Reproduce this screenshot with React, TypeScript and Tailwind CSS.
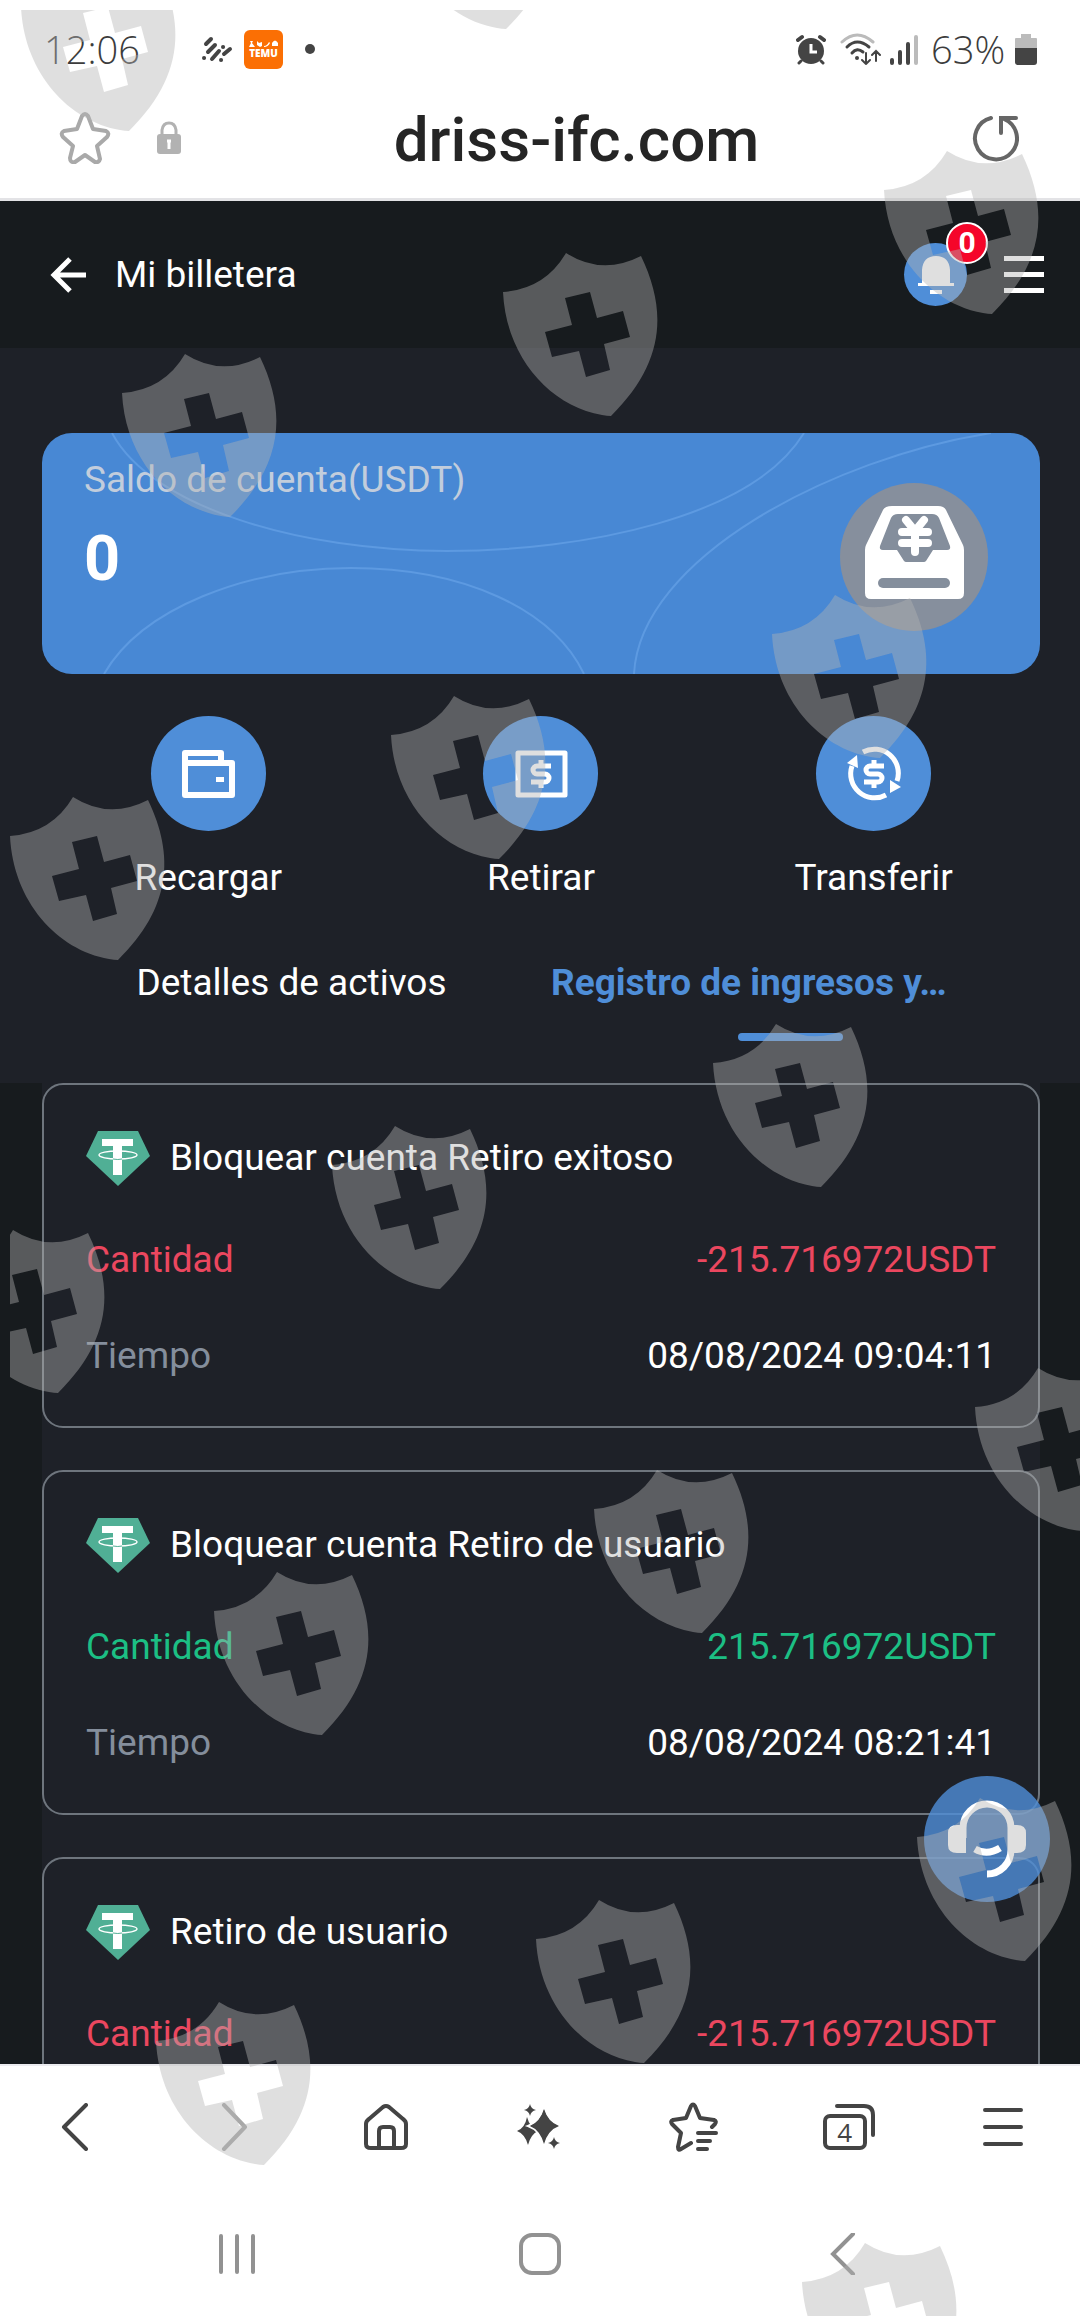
import type { ReactNode } from "react";

type Movement = {
  id: number;
  title: string;
  amount: string;
  time?: string;
  incoming: boolean;
};

const movements: Movement[] = [
  {
    id: 1,
    title: "Bloquear cuenta Retiro exitoso",
    amount: "-215.716972USDT",
    time: "08/08/2024 09:04:11",
    incoming: false,
  },
  {
    id: 2,
    title: "Bloquear cuenta Retiro de usuario",
    amount: "215.716972USDT",
    time: "08/08/2024 08:21:41",
    incoming: true,
  },
  {
    id: 3,
    title: "Retiro de usuario",
    amount: "-215.716972USDT",
    incoming: false,
  },
];

// Top-left corner of every shield in the overlay
const shields = [
  [20, -33],
  [397, -135],
  [883, 150],
  [502, 252],
  [121, 353],
  [771, 594],
  [390, 695],
  [9, 796],
  [712, 1023],
  [331, 1125],
  [-51, 1229],
  [974, 1367],
  [593, 1469],
  [213, 1571],
  [916, 1797],
  [535, 1899],
  [155, 2001],
  [801, 2242],
];

const SHIELD_PATH =
  "M1 40Q43 37 64 1Q100 24 139 4C166 60 162 112 109 164Q105 164 100 163C48 154 4 105 1 40Z" +
  "M63 46L70 73L43 80L50 105L77 99L84 125L108 118L102 92L128 85L121 59L95 66L88 40Z";

function ShieldOverlay() {
  return (
    <svg
      viewBox="0 0 1080 2316"
      preserveAspectRatio="xMidYMin slice"
      className="pointer-events-none absolute inset-0 z-20 h-full w-full"
      aria-hidden="true"
    >
      <clipPath id="overlay-area">
        <rect x="10" y="10" width="1070" height="2306" />
      </clipPath>
      <g clipPath="url(#overlay-area)" fill="#b2b2b2" fillOpacity="0.42" fillRule="evenodd">
        {shields.map(([x, y]) => (
          <path key={`${x}-${y}`} d={SHIELD_PATH} transform={`translate(${x} ${y})`} />
        ))}
      </g>
    </svg>
  );
}

function StatusBar() {
  return (
    <div className="flex h-[98px] items-center justify-between pl-11 pr-[43px] font-['Open_Sans',sans-serif] text-[38px] font-light text-[#3c3c3c]">
      <div className="flex items-center">
        <span className="w-[98px]">12:06</span>
        <svg viewBox="0 0 32 26" className="ml-[59px] h-[26px] w-8" fill="none" stroke="#444" strokeWidth="4" strokeLinecap="round">
          <path d="M5 8L10 3M7 16L14 9M3 22h.1M11 23L18 15M22 11h.1M20 24h.1M23 18L29 13" />
        </svg>
        <div className="ml-[11px] flex size-[39px] flex-col items-center justify-center rounded-[6px] bg-[#fb6f04]">
          <svg viewBox="0 0 30 7" className="h-[7px] w-[30px]" fill="#fff">
            <path d="M0 7L2 3L1 1H4L3 3L6 7ZM8 1L10 3L13 2V6L11 7L8 5ZM15 6Q18 6 20 2L21 3Q19 7 15 7ZM23 3Q26-2 29 3V6H23Z" />
          </svg>
          <span className="text-[10px] leading-[12px] font-extrabold text-white">TEMU</span>
        </div>
        <span className="ml-[22px] size-[10px] rounded-full bg-[#444]" />
      </div>
      <div className="flex items-center">
        <svg viewBox="0 0 30 31" className="h-[31px] w-[30px]" fill="none" stroke="#444" strokeLinecap="round">
          <circle cx="15" cy="17" r="13" fill="#444" stroke="none" />
          <path d="M2 6L6 3M28 6L24 3" strokeWidth="4" />
          <path d="M5 27L3 29M25 27L27 29" strokeWidth="3" />
          <path d="M15 10V18H21" stroke="#fff" strokeWidth="3" strokeLinecap="butt" />
        </svg>
        <svg viewBox="0 0 42 32" className="ml-[14px] h-8 w-[42px]" fill="none" stroke="#444" strokeWidth="3" strokeLinecap="round">
          <path d="M2 9Q17-5 33 9" stroke="#bbb" />
          <path d="M7 14Q17 4 29 14M12 20Q17 14 23 19" />
          <circle cx="17" cy="25" r="2" fill="#444" stroke="none" />
          <path d="M26 20V31M22 27L26 31L30 27M36 28V18M32 22L36 18L40 22" strokeWidth="2" />
        </svg>
        <svg viewBox="0 0 29 31" className="ml-2 h-[31px] w-[29px]" fill="none" stroke="#444" strokeWidth="4" strokeLinecap="round">
          <path d="M2 26V29M10 18V29M18 10V29" />
          <path d="M26 3V29" stroke="#bbb" />
        </svg>
        <span className="ml-3 w-[84px]">63%</span>
        <svg viewBox="0 0 22 31" className="h-[31px] w-[22px]">
          <path d="M6 0h10v4h5q1 0 1 1v9H0V5q0-1 1-1h5z" fill="#bbb" />
          <path d="M0 14h22v14q0 3-3 3H3q-3 0-3-3z" fill="#444" />
        </svg>
      </div>
    </div>
  );
}

function AddressBar() {
  return (
    <div className="flex h-[103px] items-start border-b-[3px] border-[#e3e3e6] pt-[14px] pr-[61px] pl-[59px]">
      <button type="button" aria-label="Favorito">
        <svg viewBox="0 0 52 52" className="size-[52px]" fill="none" stroke="#a9a9a9" strokeWidth="4" strokeLinejoin="round">
          <path d="M23 4Q26 0 29 4L34 17L47 19Q51 21 48 25L38 34L41 47Q40 51 36 50L26 43L16 50Q11 51 11 46L14 34L4 25Q1 21 5 19L18 17Z" />
        </svg>
      </button>
      <svg viewBox="0 0 24 34" className="mt-[9px] ml-[46px] h-[34px] w-6">
        <path d="M5 16V9Q6 2 12 2Q18 2 19 9V16" fill="none" stroke="#b2b2b2" strokeWidth="3" />
        <rect y="13" width="24" height="20" rx="3" fill="#b2b2b2" />
        <path d="M12 20V28M10 20H14" stroke="#fff" strokeWidth="3" />
      </svg>
      <span className="flex-1 pl-[1px] text-center text-[62px] leading-[56px] font-medium text-[#252525]">
        driss-ifc.com
      </span>
      <button type="button" aria-label="Recargar página">
        <svg viewBox="0 0 48 50" className="h-[50px] w-12" fill="none" stroke="#666" strokeWidth="4">
          <path d="M20 6A21 21 0 1 0 33 7" strokeLinecap="round" />
          <path d="M45 6H30V21" strokeLinecap="round" />
        </svg>
      </button>
    </div>
  );
}

function AppHeader() {
  return (
    <header className="flex h-[147px] shrink-0 items-center bg-[#171b1e] pr-9 pl-[50px] text-white">
      <button type="button" aria-label="Volver">
        <svg viewBox="0 0 38 38" className="size-[38px]" fill="none" stroke="#fff" strokeWidth="5">
          <path d="M36 19H5M20 3L4 19L20 35" />
        </svg>
      </button>
      <h1 className="ml-[27px] flex-1 text-[37px] leading-[54px]">Mi billetera</h1>
      <button
        type="button"
        aria-label="Notificaciones"
        className="relative flex size-[63px] items-center justify-center rounded-full bg-[#4f8ed8]"
      >
        <svg viewBox="0 0 36 40" className="h-10 w-9" fill="#fff">
          <path d="M4 28V15Q5 1 18 1Q31 1 32 15V28H36V31H0V28Z" />
          <path d="M12 35H24V39H12Z" />
        </svg>
        <span className="absolute -top-[21px] -right-[21px] flex size-[42px] items-center justify-center rounded-full border-2 border-white bg-[#f5062a] text-[30px] leading-none font-bold">
          0
        </span>
      </button>
      <button type="button" aria-label="Menú" className="ml-[37px] flex w-10 flex-col gap-[11px]">
        <span className="h-[5px] bg-white" />
        <span className="h-[5px] bg-white" />
        <span className="h-[5px] bg-white" />
      </button>
    </header>
  );
}

function BalanceCard() {
  return (
    <section className="relative flex min-h-[241px] overflow-hidden rounded-[30px] bg-[#4888d4] pr-[52px] pl-[42px]">
      <svg
        viewBox="0 0 998 241"
        preserveAspectRatio="none"
        className="absolute inset-0 h-full w-full"
        fill="none"
        stroke="#5d9ae1"
        strokeWidth="2"
      >
        <path d="M70 0C110 75 260 118 405 118C540 118 710 85 762 0" />
        <path d="M62 241C100 175 205 135 309 135C420 135 510 175 542 241" />
        <path d="M592 241C598 125 790 25 949 0" />
      </svg>
      <div className="relative flex-1 pt-5">
        <p className="text-[37px] leading-[54px] text-[#c2cddc]">Saldo de cuenta(USDT)</p>
        <p className="mt-5 text-[63px] leading-[64px] font-bold text-white">0</p>
      </div>
      <div className="relative mt-[50px] size-[148px] rounded-full bg-[#868f9d]">
        <svg viewBox="0 0 148 148" className="size-full">
          <path
            d="M52 23H98Q104 23 106 27L123 62Q124 64 124 67V110Q124 116 118 116H31Q25 116 25 110V67Q25 64 26 62L43 27Q45 23 52 23Z"
            fill="#fff"
          />
          <path
            d="M58 31H92Q97 31 99 35L110 63Q111 67 107 67H93L86 78Q85 79 84 79H66Q65 79 64 78L57 67H43Q39 67 40 63L51 35Q53 31 58 31Z"
            fill="#848e9c"
          />
          <path d="M43 100H105" stroke="#848e9c" strokeWidth="10" strokeLinecap="round" />
          <path
            d="M66 37L75 48L84 37M62 49H88M62 60H88M75 49V69"
            fill="none"
            stroke="#fff"
            strokeWidth="8"
            strokeLinecap="round"
            strokeLinejoin="round"
          />
        </svg>
      </div>
    </section>
  );
}

function DollarMark() {
  return (
    <g fill="none" stroke="#fff" strokeWidth="5">
      <path d="M40 22H26A4 4 0 0 0 26 30H34A4 4 0 0 1 34 38H20" />
      <path d="M30 16V21M30 39V44" />
    </g>
  );
}

function Action({ label, children }: { label: string; children: ReactNode }) {
  return (
    <button type="button" className="flex flex-col items-center">
      <span className="flex size-[115px] items-center justify-center rounded-full bg-[#4f8ed8]">
        <svg viewBox="0 0 60 60" className="size-[60px]">
          {children}
        </svg>
      </span>
      <span className="mt-[23px] text-[37px] leading-[48px] text-white">{label}</span>
    </button>
  );
}

function TetherIcon() {
  return (
    <svg viewBox="0 0 64 55" className="h-[55px] w-16">
      <path d="M12 0H52L64 25L32 55L0 25Z" fill="#50af95" />
      <path d="M16 8H47V15H36V44H27V15H16Z" fill="#fff" />
      <ellipse cx="32" cy="24" rx="19" ry="4" fill="none" stroke="#fff" strokeWidth="1.4" />
      <path d="M27 28Q32 29 36 28" fill="none" stroke="#50af95" strokeWidth="1" />
    </svg>
  );
}

function MovementCard({ item }: { item: Movement }) {
  const color = item.incoming ? "text-[#1cbf84]" : "text-[#eb475f]";

  return (
    <article className="flex flex-col gap-[42px] rounded-[21px] border-2 border-[#6e757d] px-[42px] pt-10 pb-[43px] text-[37px] leading-[54px]">
      <div className="flex h-[66px] items-center gap-5">
        <TetherIcon />
        <h2 className="text-white">{item.title}</h2>
      </div>
      <div className={`flex justify-between ${color}`}>
        <span>Cantidad</span>
        <span>{item.amount}</span>
      </div>
      {item.time && (
        <div className="flex justify-between">
          <span className="text-[#848e9c]">Tiempo</span>
          <time className="text-white">{item.time}</time>
        </div>
      )}
    </article>
  );
}

function SupportButton() {
  return (
    <button
      type="button"
      aria-label="Soporte"
      className="absolute right-[30px] bottom-[162px] z-10 size-[126px] rounded-full bg-[#4f8ed8]/80"
    >
      <svg viewBox="0 0 126 126" className="size-full" fill="none" stroke="#fff">
        <path d="M39 62V52A24 24 0 0 1 87 52V74A24 24 0 0 1 63 98" strokeWidth="7" />
        <path d="M42 49V77H33Q24 77 24 69V57Q24 49 33 49ZM84 49V77H93Q102 77 102 69V57Q102 49 93 49Z" fill="#fff" stroke="none" />
        <path d="M51 73Q63 80 76 72" strokeWidth="7" />
      </svg>
    </button>
  );
}

function BrowserNav() {
  return (
    <nav className="grid h-[124px] shrink-0 grid-cols-7 items-center justify-items-center border-t-2 border-[#ececf0]">
      <button type="button" aria-label="Atrás">
        <svg viewBox="0 0 48 48" className="size-12" fill="none" stroke="#444" strokeWidth="4" strokeLinecap="round" strokeLinejoin="round">
          <path d="M33 2L11 24L33 46" />
        </svg>
      </button>
      <button type="button" aria-label="Adelante">
        <svg viewBox="0 0 48 48" className="size-12" fill="none" stroke="#a8a8a8" strokeWidth="4" strokeLinecap="round" strokeLinejoin="round">
          <path d="M17 2L38 24L17 46" />
        </svg>
      </button>
      <button type="button" aria-label="Inicio">
        <svg viewBox="0 0 48 48" className="size-12" fill="none" stroke="#444" strokeWidth="4" strokeLinejoin="round">
          <path d="M21 4Q24 2 27 4L41 16Q44 18 44 21V41Q44 45 39 45H9Q4 45 4 41V21Q4 18 7 16Z" />
          <path d="M17 45V28Q17 24 21 24H28Q32 24 32 28V45" />
        </svg>
      </button>
      <button type="button" aria-label="Asistente">
        <svg viewBox="0 0 48 48" className="size-12" fill="#444">
          <path d="M11 14Q14 25 22 28Q15 31 12 42Q9 31 1 28Q9 25 11 14Z" />
          <path d="M28 4Q32 19 44 23Q32 27 28 42Q24 27 12 23Q24 19 28 4Z" stroke="#fff" strokeWidth="2" />
          <path d="M28 6Q32 19 43 23Q32 27 28 41Q24 27 14 23Q24 19 28 6Z" />
          <path d="M14 1Q15 6 20 7Q15 8 14 13Q13 8 8 7Q13 6 14 1ZM38 34Q39 39 44 40Q39 41 38 46Q37 41 32 40Q37 39 38 34Z" />
        </svg>
      </button>
      <button type="button" aria-label="Favoritos">
        <svg viewBox="0 0 50 50" className="size-[50px]" fill="none" stroke="#444" strokeWidth="4" strokeLinecap="round" strokeLinejoin="round">
          <path d="M43 25L46 22Q48 19 45 18L31 16L26 4Q24 1 22 4L17 16L4 18Q1 19 3 22L12 31L9 45Q9 49 12 47L22 41" />
          <path d="M29 31H47M29 39H41M29 47H38" />
        </svg>
      </button>
      <button type="button" aria-label="Pestañas" className="relative h-12 w-[52px]">
        <svg viewBox="0 0 52 48" className="h-12 w-[52px]" fill="none" stroke="#444" strokeWidth="4" strokeLinecap="round">
          <path d="M14 3H41Q50 3 50 12V32" />
          <rect x="2" y="13" width="40" height="32" rx="5" />
        </svg>
        <span className="absolute top-[11px] left-0 w-11 text-center font-['Open_Sans',sans-serif] text-[26px] leading-9 text-[#444]">4</span>
      </button>
      <button type="button" aria-label="Más opciones">
        <svg viewBox="0 0 42 42" className="size-[42px]" stroke="#444" strokeWidth="4" strokeLinecap="round">
          <path d="M3 4H39M3 21H39M3 38H39" />
        </svg>
      </button>
    </nav>
  );
}

function SystemNav() {
  return (
    <nav className="grid h-[128px] shrink-0 grid-cols-3 items-center justify-items-center px-[86px] pt-1">
      <button type="button" aria-label="Recientes">
        <svg viewBox="0 0 42 42" className="size-[42px]" stroke="#929292" strokeWidth="4" strokeLinecap="round">
          <path d="M5 3V39M21 3V39M37 3V39" />
        </svg>
      </button>
      <button type="button" aria-label="Pantalla de inicio">
        <svg viewBox="0 0 42 42" className="size-[42px]" fill="none" stroke="#929292" strokeWidth="4">
          <rect x="2" y="2" width="38" height="38" rx="11" />
        </svg>
      </button>
      <button type="button" aria-label="Volver atrás">
        <svg viewBox="0 0 42 42" className="size-[42px]" fill="none" stroke="#929292" strokeWidth="4" strokeLinecap="round">
          <path d="M31 1L11 21L31 41" />
        </svg>
      </button>
    </nav>
  );
}

export default function App() {
  return (
    <div className="relative flex h-screen flex-col overflow-hidden bg-white font-[Roboto,sans-serif]">
      <StatusBar />
      <AddressBar />
      <div className="relative flex min-h-0 flex-1 flex-col bg-[#171b1e]">
        <AppHeader />
        <main className="min-h-0 flex-1 overflow-y-auto [scrollbar-width:none]">
          <div className="bg-[#1e2128] pt-[85px] pr-10 pb-[42px] pl-[42px]">
            <BalanceCard />
            <div className="mt-[42px] grid grid-cols-3">
              <Action label="Recargar">
                <g fill="none" stroke="#fff" strokeWidth="6" strokeLinejoin="round">
                  <path d="M7 19V9H43V19M7 19H54V51H7Z" />
                </g>
                <path d="M38 33H46V38H38Z" fill="#fff" />
              </Action>
              <Action label="Retirar">
                <rect x="7" y="9" width="47" height="42" fill="none" stroke="#fff" strokeWidth="5" strokeLinejoin="round" />
                <DollarMark />
              </Action>
              <Action label="Transferir">
                <g fill="none" stroke="#fff" strokeWidth="5">
                  <path d="M19 8A24 24 0 0 1 53 37" />
                  <path d="M42 51A24 24 0 0 1 8 22" />
                </g>
                <path d="M3 19L13 11L14 24ZM57 43L46 49V36Z" fill="#fff" />
                <DollarMark />
              </Action>
            </div>
            <div role="tablist" className="mt-[54px] grid grid-cols-2 text-[37px] leading-[54px]">
              <button type="button" role="tab" aria-selected="false" className="self-start text-white">
                Detalles de activos
              </button>
              <button type="button" role="tab" aria-selected="true" className="flex flex-col items-center px-[10px] font-bold text-[#4f8ed8]">
                <span className="w-full text-left">Registro de ingresos y…</span>
                <span className="mt-[23px] h-2 w-[105px] rounded-full bg-[#4f8ed8]" />
              </button>
            </div>
          </div>
          <div className="mr-10 ml-[42px] flex flex-col gap-[42px] bg-[#1e2128]">
            {movements.map((item) => (
              <MovementCard key={item.id} item={item} />
            ))}
          </div>
        </main>
        <SupportButton />
      </div>
      <BrowserNav />
      <SystemNav />
      <ShieldOverlay />
    </div>
  );
}
